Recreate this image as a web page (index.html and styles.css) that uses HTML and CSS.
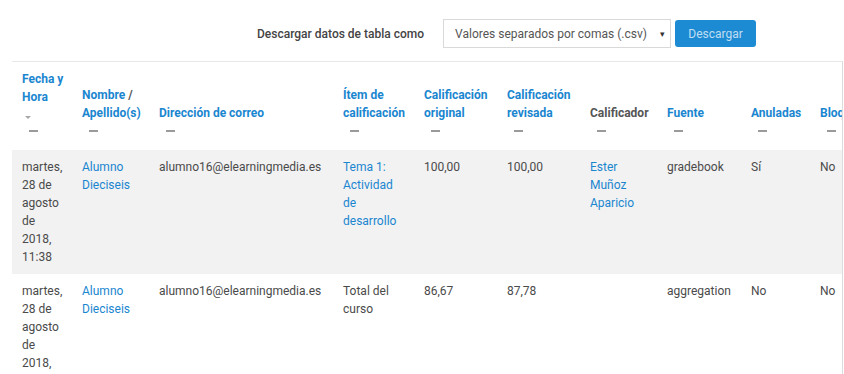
FILE: index.html
```html
<!DOCTYPE html>
<html lang="es">
<head>
<meta charset="utf-8">
<link rel="stylesheet" href="styles.css">
</head>
<body>
<div class="toolbar">
  <span class="tb-label">Descargar datos de tabla como</span>
  <div class="select">
    <span>Valores separados por comas (.csv)</span>
    <span class="caret">▾</span>
  </div>
  <button class="btn">Descargar</button>
</div>
<div class="wrap">
  <table class="grid">
    <colgroup>
      <col class="c1"><col class="c2"><col class="c3"><col class="c4"><col class="c5">
      <col class="c6"><col class="c7"><col class="c8"><col class="c9"><col class="c10">
    </colgroup>
    <thead>
      <tr>
        <th><a>Fecha y Hora</a><div class="sort"></div><div class="dash"></div></th>
        <th><a>Nombre</a> <span class="sep">/</span> <a>Apellido(s)</a><div class="dash"></div></th>
        <th><a>Dirección de correo</a><div class="dash"></div></th>
        <th><a>Ítem de calificación</a><div class="dash"></div></th>
        <th><a>Calificación original</a><div class="dash"></div></th>
        <th><a>Calificación revisada</a><div class="dash"></div></th>
        <th><span class="plain">Calificador</span><div class="dash"></div></th>
        <th><a>Fuente</a><div class="dash"></div></th>
        <th><a>Anuladas</a><div class="dash"></div></th>
        <th><a>Bloqueadas</a><div class="dash"></div></th>
      </tr>
    </thead>
    <tbody>
      <tr class="odd">
        <td>martes, 28 de agosto de 2018, 11:38</td>
        <td><a>Alumno Dieciseis</a></td>
        <td>alumno16@elearningmedia.es</td>
        <td><a>Tema 1: Actividad de desarrollo</a></td>
        <td>100,00</td>
        <td>100,00</td>
        <td><a>Ester Muñoz Aparicio</a></td>
        <td>gradebook</td>
        <td>Sí</td>
        <td>No</td>
      </tr>
      <tr>
        <td>martes, 28 de agosto de 2018, 11:38</td>
        <td><a>Alumno Dieciseis</a></td>
        <td>alumno16@elearningmedia.es</td>
        <td>Total del curso</td>
        <td>86,67</td>
        <td>87,78</td>
        <td></td>
        <td>aggregation</td>
        <td>No</td>
        <td>No</td>
      </tr>
    </tbody>
  </table>
</div>
</body>
</html>
```
FILE: styles.css
```css
html, body {
  margin: 0;
  padding: 0;
  background: #fff;
  font-family: Roboto, "Helvetica Neue", Arial, sans-serif;
  font-size: 12px;
  color: #4a4a4a;
}
.toolbar {
  display: flex;
  align-items: center;
  padding: 19px 0 0 257px;
  height: 29px;
}
.tb-label {
  font-weight: 500;
  color: #444;
  font-size: 12px;
}
.select {
  margin-left: 19px;
  height: 27px;
  border: 1px solid #d9d9d9;
  display: flex;
  align-items: center;
  justify-content: space-between;
  padding: 0 0 0 11px;
  box-sizing: content-box;
  color: #555;
  width: 215px;
}
.select .caret {
  font-size: 9px;
  color: #333;
  margin-right: 5px;
}
.btn {
  margin-left: 4px;
  height: 27px;
  width: 81px;
  border: none;
  border-radius: 3px;
  background: #1d8bd4;
  color: rgba(255,255,255,0.72);
  font-family: inherit;
  font-size: 12px;
  padding: 0;
}
.wrap {
  margin: 13px 2px 0 12px;
  width: 830px;
  overflow: hidden;
  border-top: 1px solid #e8e8e8;
  border-right: 1px solid #dcdcdc;
  height: 400px;
}
.grid {
  border-collapse: collapse;
  table-layout: fixed;
  width: 878px;
  line-height: 18px;
}
.c1 { width: 60px; }
.c2 { width: 77px; }
.c3 { width: 184px; }
.c4 { width: 81px; }
.c5 { width: 83px; }
.c6 { width: 83px; }
.c7 { width: 77px; }
.c8 { width: 84px; }
.c9 { width: 69px; }
.c10 { width: 80px; }
th {
  text-align: left;
  vertical-align: bottom;
  padding: 8px 4px 12px 10px;
  font-weight: bold;
  white-space: normal;
}
th a, td a {
  color: #1a86d0;
  text-decoration: none;
}
th .sep, th .plain {
  color: #555;
}
td {
  vertical-align: top;
  padding: 8px 4px 8px 10px;
}
th:nth-child(1), td:nth-child(1) {
  padding-right: 6px;
}
td:nth-child(1) {
  padding-right: 7px;
}
th:nth-child(4), td:nth-child(4) {
  padding-right: 7px;
}
tr.odd td {
  background: #f2f2f2;
}
.sort {
  height: 16px;
  position: relative;
}
.sort::after {
  content: "";
  position: absolute;
  left: 3px;
  top: 10px;
  border-left: 3px solid transparent;
  border-right: 3px solid transparent;
  border-top: 3px solid #a8a8a8;
}
.dash {
  height: 16px;
  position: relative;
}
.dash::after {
  content: "";
  position: absolute;
  left: 7px;
  top: 8px;
  width: 9px;
  height: 2px;
  background: #9a9a9a;
}
```
